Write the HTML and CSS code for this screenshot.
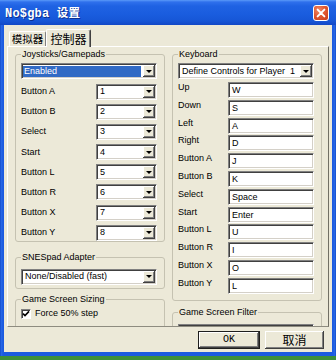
FILE: index.html
```html
<!DOCTYPE html>
<html>
<head>
<meta charset="utf-8">
<title>No$gba 设置</title>
<link rel="stylesheet" href="styles.css">
</head>
<body>
<div class="window">
  <div class="titlebar">
    <span class="title">No$gba <span class="title-cjk">设置</span></span>
    <span class="close">
      <svg viewBox="0 0 16 16" width="16" height="16"><path d="M4.6 4.6l6.8 6.8M11.4 4.6l-6.8 6.8" stroke="#fff" stroke-width="1.9" stroke-linecap="round"/></svg>
    </span>
  </div>
  <div class="client">
    <div class="tabs">
      <span class="tab">模拟器</span>
      <span class="tab active">控制器</span>
    </div>
    <div class="panel">
      <div class="col">
        <fieldset class="group g-joy">
          <legend>Joysticks/Gamepads</legend>
          <div class="combo"><span class="val sel">Enabled</span><span class="arrow"></span></div>
          <div class="joy-rows">
            <span class="lbl">Button A</span><div class="combo"><span class="val">1</span><span class="arrow"></span></div>
            <span class="lbl">Button B</span><div class="combo"><span class="val">2</span><span class="arrow"></span></div>
            <span class="lbl">Select</span><div class="combo"><span class="val">3</span><span class="arrow"></span></div>
            <span class="lbl">Start</span><div class="combo"><span class="val">4</span><span class="arrow"></span></div>
            <span class="lbl">Button L</span><div class="combo"><span class="val">5</span><span class="arrow"></span></div>
            <span class="lbl">Button R</span><div class="combo"><span class="val">6</span><span class="arrow"></span></div>
            <span class="lbl">Button X</span><div class="combo"><span class="val">7</span><span class="arrow"></span></div>
            <span class="lbl">Button Y</span><div class="combo"><span class="val">8</span><span class="arrow"></span></div>
          </div>
        </fieldset>
        <fieldset class="group g-snes">
          <legend>SNESpad Adapter</legend>
          <div class="combo"><span class="val">None/Disabled (fast)</span><span class="arrow"></span></div>
        </fieldset>
        <fieldset class="group g-size">
          <legend>Game Screen Sizing</legend>
          <div class="check">
            <span class="box"><svg viewBox="0 0 8 8" width="8" height="8"><path d="M1 3.6l2 2 4-4.2" fill="none" stroke="#000" stroke-width="1.6"/></svg></span>
            <span>Force 50% step</span>
          </div>
        </fieldset>
      </div>
      <div class="col">
        <fieldset class="group g-kbd">
          <legend>Keyboard</legend>
          <div class="combo"><span class="val">Define Controls for Player&nbsp; 1</span><span class="arrow"></span></div>
          <div class="kbd-rows">
            <span class="lbl">Up</span><div class="field">W</div>
            <span class="lbl">Down</span><div class="field">S</div>
            <span class="lbl">Left</span><div class="field">A</div>
            <span class="lbl">Right</span><div class="field">D</div>
            <span class="lbl">Button A</span><div class="field">J</div>
            <span class="lbl">Button B</span><div class="field">K</div>
            <span class="lbl">Select</span><div class="field">Space</div>
            <span class="lbl">Start</span><div class="field">Enter</div>
            <span class="lbl">Button L</span><div class="field">U</div>
            <span class="lbl">Button R</span><div class="field">I</div>
            <span class="lbl">Button X</span><div class="field">O</div>
            <span class="lbl">Button Y</span><div class="field">L</div>
          </div>
        </fieldset>
        <fieldset class="group g-filter">
          <legend>Game Screen Filter</legend>
          <div class="combo"><span class="val"></span><span class="arrow"></span></div>
        </fieldset>
      </div>
    </div>
    <div class="footer">
      <button class="btn btn-default">OK</button>
      <button class="btn btn-cancel">取消</button>
    </div>
  </div>
</div>
</body>
</html>
```
FILE: styles.css
```css
html, body {
  margin: 0;
  padding: 0;
}
body {
  width: 336px;
  height: 360px;
  overflow: hidden;
  background: #3d8f3a;
  font-family: "Liberation Sans", "Noto Sans CJK SC", sans-serif;
  font-size: 9px;
  color: #000;
}
.window {
  width: 336px;
  height: 356px;
  box-sizing: border-box;
  padding: 0 4px 4px 4px;
  display: flex;
  flex-direction: column;
  background: linear-gradient(to right, #0a3fc0 0, #2a6ae6 1px, #1b5ae0 3px, #1b5ae0 calc(100% - 3px), #2a6ae6 calc(100% - 1px), #0a3fc0 100%);
}
.titlebar {
  height: 25px;
  margin: 0 -4px;
  padding: 0 7px 0 5px;
  display: flex;
  align-items: center;
  justify-content: space-between;
  background: linear-gradient(to bottom, #5a9af8 0, #2f70ec 2px, #1f62e3 6px, #1a5ddf 14px, #1656d6 21px, #1248c6 25px);
}
.title {
  color: #fff;
  font-family: "Liberation Mono", "Noto Sans CJK SC", monospace;
  font-weight: bold;
  font-size: 12px;
  line-height: 14px;
  text-shadow: 1px 1px 0 #0d2f8f;
  letter-spacing: 0.2px;
}
.title-cjk {
  font-family: "Noto Sans CJK SC", sans-serif;
  font-size: 11.5px;
}
.close {
  width: 16px;
  height: 16px;
  box-sizing: border-box;
  border: 1px solid #fff;
  border-radius: 3px;
  background: radial-gradient(circle at 35% 30%, #f08c6a 0, #e25a33 45%, #c63a18 100%);
  display: flex;
  align-items: center;
  justify-content: center;
}
.close svg {
  display: block;
  margin: -1px;
}
.client {
  flex: 1;
  background: #ece9d8;
  display: flex;
  flex-direction: column;
  min-height: 0;
}
.tabs {
  height: 17px;
  margin-top: 4px;
  padding-left: 5px;
  display: flex;
  align-items: flex-end;
  position: relative;
  z-index: 1;
}
.tab {
  font-family: "Noto Sans CJK SC", sans-serif;
  height: 15px;
  box-sizing: border-box;
  width: 37px;
  border-top: 1px solid #fff;
  border-left: 1px solid #fff;
  border-right: 1px solid #808080;
  border-radius: 2px 2px 0 0;
  font-size: 10.5px;
  line-height: 14px;
  text-align: center;
  background: #ece9d8;
}
.tab.active {
  width: 45px;
  height: 18px;
  margin-bottom: -1px;
  font-size: 12px;
  line-height: 17px;
  border-right: 1px solid #404040;
  box-shadow: inset -1px 0 0 #808080;
}
.panel {
  height: 281px;
  margin: 0 3px;
  box-sizing: border-box;
  border-top: 1px solid #fff;
  border-left: 1px solid #fff;
  border-right: 1px solid #716f64;
  border-bottom: 1px solid #8e8c80;
  padding: 0 6px 0 7px;
  display: flex;
  gap: 7px;
  overflow: hidden;
}
.col {
  width: 150px;
  display: flex;
  flex-direction: column;
  flex: none;
}
.group {
  width: 150px;
  box-sizing: border-box;
  min-width: 0;
  margin: 0;
  padding: 0 7px 0 5px;
  border: 1px solid #c5c2b1;
  border-radius: 3px;
  flex: none;
}
.group legend {
  padding: 0 1px;
  height: 11px;
  line-height: 11px;
  font-size: 9px;
  color: #000;
}
.g-joy, .g-kbd {
  margin-top: 1.5px;
  padding-top: 3.5px;
  padding-bottom: 0.5px;
}
.g-kbd {
  padding-bottom: 4.4px;
}
.g-snes {
  margin-top: 10px;
  padding-top: 5.5px;
  padding-bottom: 3.5px;
}
.g-size {
  margin-top: 4.5px;
  padding-top: 4px;
  padding-bottom: 20px;
}
.g-filter {
  margin-top: 6.5px;
  padding-top: 5.5px;
  padding-bottom: 20px;
}
.combo {
  height: 16px;
  box-sizing: border-box;
  background: #fff;
  border: 1px solid;
  border-color: #808080 #fff #fff #808080;
  box-shadow: inset 1px 1px 0 #404040, inset -1px -1px 0 #d4d0c8;
  display: flex;
  align-items: center;
  white-space: nowrap;
  overflow: hidden;
}
.combo .val {
  flex: 1;
  min-width: 0;
  padding-left: 3px;
  line-height: 11px;
  overflow: hidden;
}
.combo .val.sel {
  background: #316ac5;
  color: #fff;
  height: 11px;
  margin: 0 2px 0 1px;
  padding-left: 1px;
}
.combo .arrow {
  width: 12px;
  height: 12px;
  margin-right: 1px;
  flex: none;
  background: #ece9d8;
  box-shadow: inset -1px -1px 0 #404040, inset 1px 1px 0 #fff, inset -2px -2px 0 #808080;
  display: flex;
  align-items: center;
  justify-content: center;
}
.combo .arrow::before {
  content: "";
  width: 0;
  height: 0;
  margin: 0 1px 0 0;
  border-left: 3px solid transparent;
  border-right: 3px solid transparent;
  border-top: 3px solid #000;
}
.lbl {
  line-height: 11px;
  white-space: nowrap;
}
.joy-rows {
  margin-top: 4.5px;
  display: grid;
  grid-template-columns: 75px 61px;
  grid-auto-rows: 16px;
  row-gap: 4.2px;
  align-items: center;
}
.kbd-rows {
  margin-top: 3px;
  display: grid;
  grid-template-columns: 50px 86px;
  grid-auto-rows: 17.8px;
  align-items: start;
}
.kbd-rows .lbl {
  line-height: 10px;
}
.field {
  height: 16px;
  box-sizing: border-box;
  background: #fff;
  border: 1px solid;
  border-color: #808080 #fff #fff #808080;
  box-shadow: inset 1px 1px 0 #404040, inset -1px -1px 0 #d4d0c8;
  padding-left: 3px;
  line-height: 14px;
}
.check {
  display: flex;
  align-items: center;
  height: 10px;
  gap: 4px;
  padding-left: 0;
}
.check .box {
  width: 10px;
  height: 10px;
  box-sizing: border-box;
  background: #fff;
  border: 1px solid;
  border-color: #808080 #fff #fff #808080;
  box-shadow: inset 1px 1px 0 #404040;
  display: flex;
  align-items: center;
  justify-content: center;
}
.check .box svg {
  display: block;
}
.check span:last-child {
  line-height: 11px;
}
.footer {
  flex: 1;
  display: flex;
  justify-content: flex-end;
  align-items: flex-start;
  gap: 5px;
  padding: 4px 8px 0 0;
}
.btn {
  height: 18px;
  box-sizing: border-box;
  padding: 0;
  margin: 0;
  background: #ece9d8;
  color: #000;
  border: none;
  box-shadow: inset -1px -1px 0 #404040, inset 1px 1px 0 #fff, inset -2px -2px 0 #808080;
}
.btn-default {
  width: 62px;
  border: 1px solid #1e1e1e;
  font-family: "Liberation Mono", monospace;
  font-size: 10px;
  line-height: 14px;
}
.btn-cancel {
  width: 59px;
  font-family: "Noto Sans CJK SC", sans-serif;
  font-size: 12px;
  line-height: 16px;
}
```
